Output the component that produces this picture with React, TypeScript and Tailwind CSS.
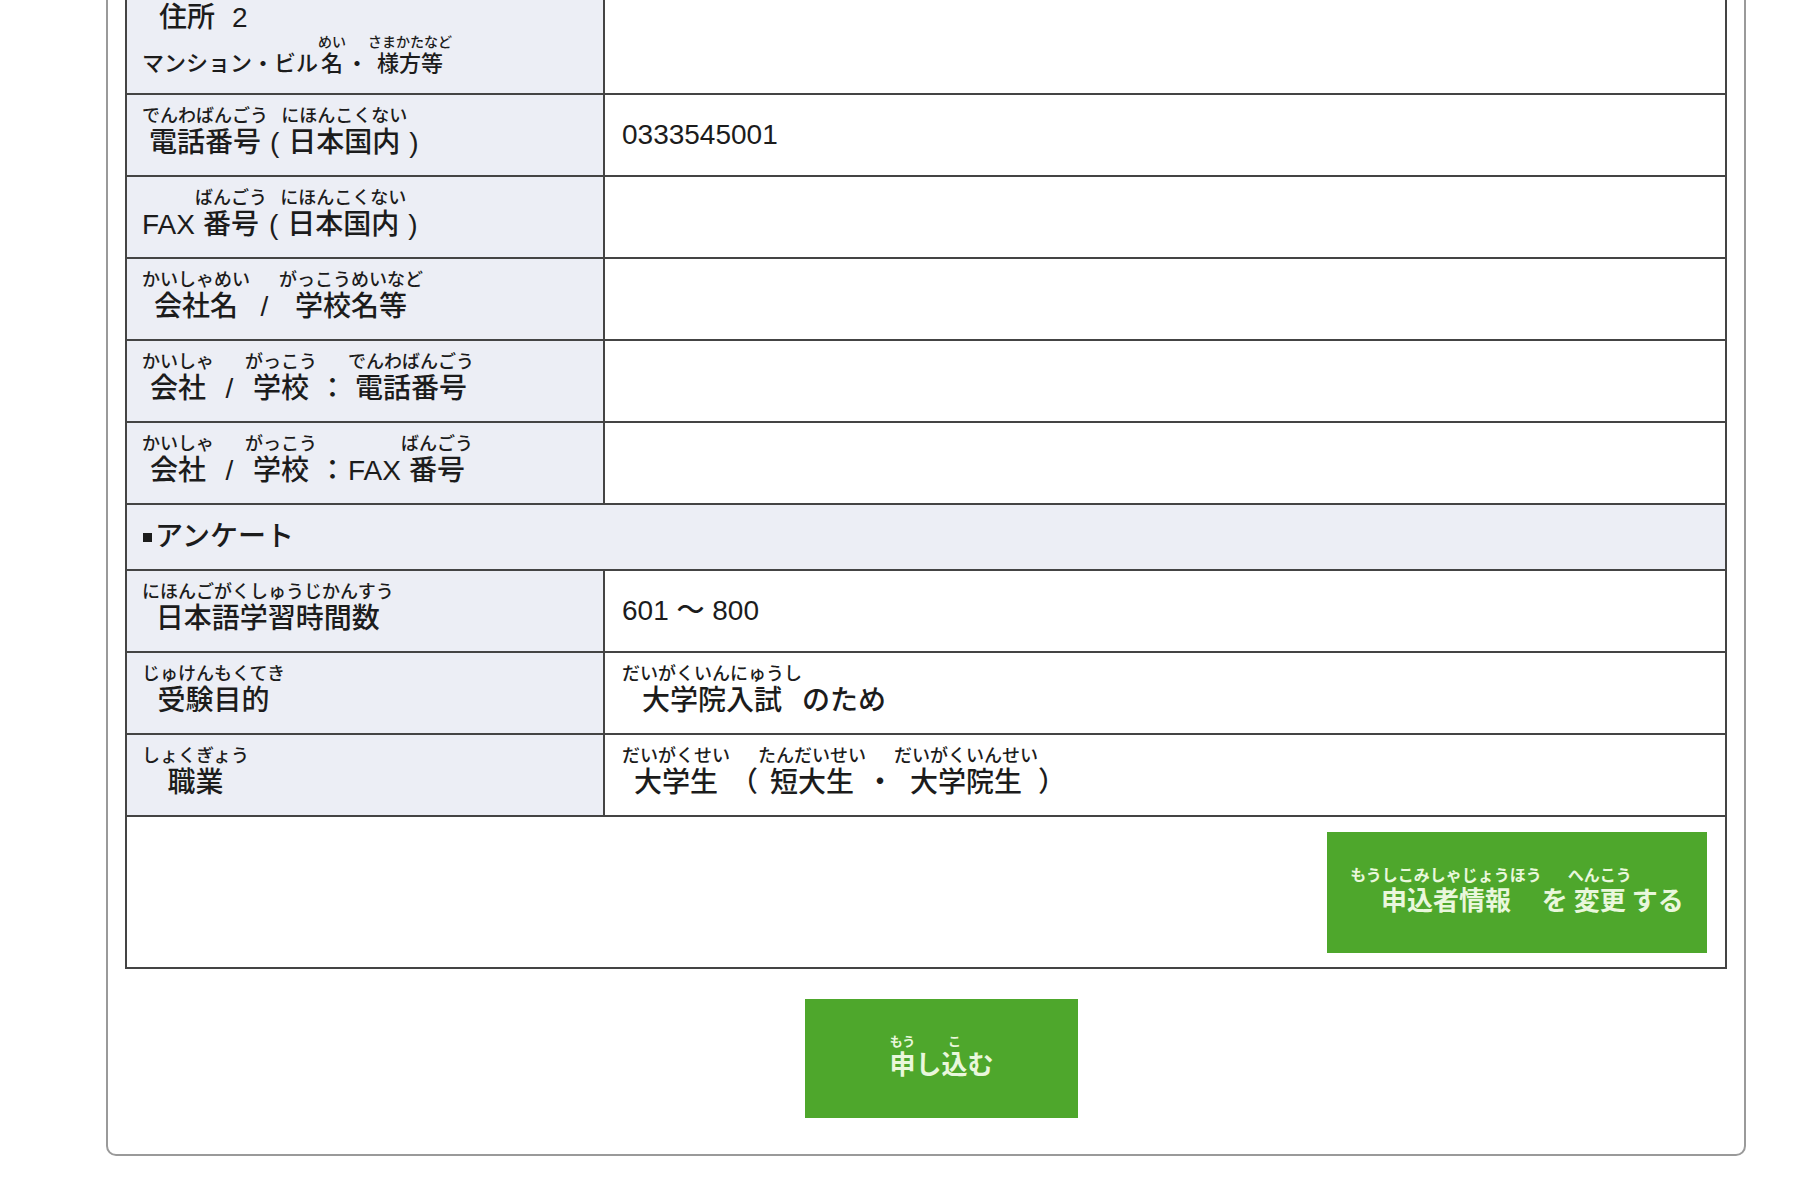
import type { ReactNode } from "react";

const FONT = "font-['Liberation_Sans','Noto_Sans_CJK_JP',sans-serif]";
const LABEL_BG = "bg-[#eceef5]";

type RtSize = "md" | "sm" | "btn" | "xs";

const rtClass: Record<RtSize, string> = {
  md: "text-[18px] leading-[22px]",
  sm: "text-[14px] leading-[17px]",
  btn: "text-[16px] leading-[20px]",
  xs: "text-[13px] leading-[16px]",
};

// furigana group: reading centred over the base text
function Rb({ rt, size = "md", children }: { rt: string; size?: RtSize; children: ReactNode }) {
  return (
    <span className="flex flex-col items-center">
      <span className={rtClass[size]}>{rt}</span>
      <span>{children}</span>
    </span>
  );
}

function Line({ small, children }: { small?: boolean; children: ReactNode }) {
  return (
    <div className={`flex items-end whitespace-pre ${small ? "text-[22px] leading-[26px]" : "text-[28px] leading-[32px]"}`}>
      {children}
    </div>
  );
}

function Row({
  label,
  value,
  h = "h-[82px]",
  center,
}: {
  label: ReactNode;
  value?: ReactNode;
  h?: string;
  center?: boolean;
}) {
  return (
    <div className={`grid grid-cols-[478px_1fr] border-b-2 border-[#444] ${h}`}>
      <div className={`${LABEL_BG} border-r-2 border-[#444] pl-[15px] pt-[10px]`}>{label}</div>
      <div className={`bg-white pl-[17px] ${center ? "flex items-center" : "pt-[10px]"}`}>{value}</div>
    </div>
  );
}

function Slash() {
  return <span className="w-[31px] text-center">/</span>;
}

function Colon() {
  return <span className="w-[31px] text-center">：</span>;
}

export default function App() {
  return (
    <div className={`min-h-screen bg-white text-[#1c1c1c] font-medium ${FONT}`}>
      <div className="ml-[106px] w-[1640px] -mt-[30px] border-2 border-[#9a9a9a] rounded-[10px] bg-white px-[17px] pt-[18px] pb-[36px]">
        <div className="border-2 border-[#444]">
          <Row
            h="h-[103px]"
            label={
              <>
                {/* reading above 住所 scrolls off the top of the page */}
                <Line>
                  <span className="px-[17px]">住所</span>
                  <span>2</span>
                </Line>
                <Line small>
                  <span>マンション・ビル</span>
                  <Rb rt="めい" size="sm">名</Rb>
                  <span>・</span>
                  <Rb rt="さまかたなど" size="sm">様方等</Rb>
                </Line>
              </>
            }
          />
          <Row
            center
            label={
              <Line>
                <Rb rt="でんわばんごう">電話番号</Rb>
                <span className="px-[2px]">(</span>
                <Rb rt="にほんこくない">日本国内</Rb>
                <span className="px-[2px]">)</span>
              </Line>
            }
            value={<span className="text-[28px] leading-[32px]">0333545001</span>}
          />
          <Row
            label={
              <Line>
                <span>FAX</span>
                <Rb rt="ばんごう">番号</Rb>
                <span className="px-[2px]">(</span>
                <Rb rt="にほんこくない">日本国内</Rb>
                <span className="px-[2px]">)</span>
              </Line>
            }
          />
          <Row
            label={
              <Line>
                <Rb rt="かいしゃめい">会社名</Rb>
                <span className="w-[29px] text-center">/</span>
                <Rb rt="がっこうめいなど">学校名等</Rb>
              </Line>
            }
          />
          <Row
            label={
              <Line>
                <Rb rt="かいしゃ">会社</Rb>
                <Slash />
                <Rb rt="がっこう">学校</Rb>
                <Colon />
                <Rb rt="でんわばんごう">電話番号</Rb>
              </Line>
            }
          />
          <Row
            label={
              <Line>
                <Rb rt="かいしゃ">会社</Rb>
                <Slash />
                <Rb rt="がっこう">学校</Rb>
                <Colon />
                <span>FAX</span>
                <Rb rt="ばんごう">番号</Rb>
              </Line>
            }
          />

          {/* section header */}
          <div className={`${LABEL_BG} h-[66px] border-b-2 border-[#444] flex items-center pl-[16px] text-[28px] leading-[32px]`}>
            <span className="w-[9px] h-[9px] bg-[#1c1c1c] mr-[3px]" />
            <span>アンケート</span>
          </div>

          <Row
            center
            label={
              <Line>
                <Rb rt="にほんごがくしゅうじかんすう">日本語学習時間数</Rb>
              </Line>
            }
            value={<span className="text-[28px] leading-[32px] whitespace-pre">601 ～ 800</span>}
          />
          <Row
            label={
              <Line>
                <Rb rt="じゅけんもくてき">受験目的</Rb>
              </Line>
            }
            value={
              <Line>
                <Rb rt="だいがくいんにゅうし">大学院入試</Rb>
                <span>のため</span>
              </Line>
            }
          />
          <Row
            label={
              <Line>
                <Rb rt="しょくぎょう">職業</Rb>
              </Line>
            }
            value={
              <Line>
                <Rb rt="だいがくせい">大学生</Rb>
                <span>（</span>
                <Rb rt="たんだいせい">短大生</Rb>
                <span>・</span>
                <Rb rt="だいがくいんせい">大学院生</Rb>
                <span>）</span>
              </Line>
            }
          />

          <div className="h-[150px] flex justify-end items-start pt-[15px] pr-[18px] bg-white">
            <button className="w-[380px] h-[121px] bg-[#4ea72c] text-[#e9f7dc] font-bold flex items-center justify-center">
              <div className="flex items-end text-[26px] leading-[30px] pb-[4px]">
                <Rb rt="もうしこみしゃじょうほう" size="btn">申込者情報</Rb>
                <span>を</span>
                <Rb rt="へんこう" size="btn">変更</Rb>
                <span>する</span>
              </div>
            </button>
          </div>
        </div>

        <div className="mt-[30px] flex justify-center pl-[31px]">
          <button className="w-[273px] h-[119px] bg-[#4ea72c] text-[#e9f7dc] font-bold flex items-center justify-center">
            <div className="flex items-end text-[26px] leading-[30px] pb-[4px]">
              <Rb rt="もう" size="xs">申</Rb>
              <span>し</span>
              <Rb rt="こ" size="xs">込</Rb>
              <span>む</span>
            </div>
          </button>
        </div>
      </div>
    </div>
  );
}
